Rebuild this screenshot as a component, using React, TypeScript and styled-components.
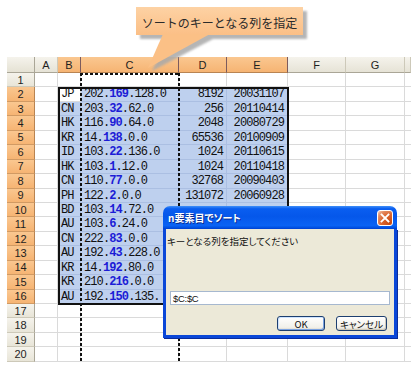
import React from 'react';
import styled, { createGlobalStyle } from 'styled-components';

const COLS = ['A', 'B', 'C', 'D', 'E', 'F', 'G', 'H'];
const TRACKS = '28px 23px 23px 98px 48px 61px 58px 59px 6px';
const ROW_H = 14.45;

// country, ip head, highlighted octet, ip tail, size, date
// (size/date of rows 10-16 sit under the dialog, so they are left blank)
type Row = [string, string, string, string, string, string];

const DATA: Row[] = [
  ['JP', '202.', '169', '.128.0', '8192', '20031107'],
  ['CN', '203.', '32', '.62.0', '256', '20110414'],
  ['HK', '116.', '90', '.64.0', '2048', '20080729'],
  ['KR', '14.', '138', '.0.0', '65536', '20100909'],
  ['ID', '103.', '22', '.136.0', '1024', '20110615'],
  ['HK', '103.', '1', '.12.0', '1024', '20110418'],
  ['CN', '110.', '77', '.0.0', '32768', '20090403'],
  ['PH', '122.', '2', '.0.0', '131072', '20060928'],
  ['BD', '103.', '14', '.72.0', '', ''],
  ['AU', '103.', '6', '.24.0', '', ''],
  ['CN', '222.', '83', '.0.0', '', ''],
  ['AU', '192.', '43', '.228.0', '', ''],
  ['KR', '14.', '192', '.80.0', '', ''],
  ['KR', '210.', '216', '.0.0', '', ''],
  ['AU', '192.', '150', '.135.', '', ''],
];

const GlobalStyle = createGlobalStyle`
  html, body {
    margin: 0;
    padding: 0;
    background: #fff;
  }
  body {
    font-family: "Liberation Sans", Arial, sans-serif;
  }
`;

const Screen = styled.div`
  position: relative;
  width: 419px;
  height: 370px;
  overflow: hidden;
  box-sizing: border-box;
  padding: 57px 8px 0 7px;
  background: #fff;
`;

/* cells and the selection marks share one grid cell, stacked */
const SheetStack = styled.div`
  display: grid;
  & > * {
    grid-area: 1 / 1;
  }
`;

const SheetGrid = styled.div`
  display: grid;
  grid-template-columns: ${TRACKS};
  grid-template-rows: 16px repeat(20, ${ROW_H}px);
`;

const MarkGrid = styled(SheetGrid)`
  pointer-events: none;
`;

const Corner = styled.div`
  background: linear-gradient(#f5f3ec, #e5e2d4);
  border-right: 1px solid #aaa697;
  border-bottom: 1px solid #aaa697;
`;

const ColHead = styled.div<{ $on?: boolean }>`
  display: flex;
  align-items: center;
  justify-content: center;
  overflow: hidden;
  font-size: 11px;
  color: #1e1e1e;
  border-bottom: 1px solid ${p => (p.$on ? '#b98452' : '#aaa697')};
  border-right: 1px solid ${p => (p.$on ? '#7d5b5d' : '#cdc9b9')};
  background: ${p =>
    p.$on ? 'linear-gradient(#fac790, #f6b473)' : 'linear-gradient(#f5f3ec, #e6e3d6)'};
`;

const RowHead = styled.div<{ $on?: boolean }>`
  display: flex;
  align-items: center;
  justify-content: center;
  font-size: 11px;
  color: #1e1e1e;
  border-right: 1px solid ${p => (p.$on ? '#b98452' : '#aaa697')};
  border-bottom: 1px solid ${p => (p.$on ? '#d19a63' : '#cdc9b9')};
  background: ${p =>
    p.$on ? 'linear-gradient(#fac790, #f6b473)' : 'linear-gradient(#f5f3ec, #e8e5d8)'};
`;

const Cell = styled.div<{ $sel?: boolean; $right?: boolean; $edge?: boolean }>`
  box-sizing: border-box;
  overflow: hidden;
  white-space: nowrap;
  padding: 1px 3px 0 3px;
  font: 12px/12px "Liberation Mono", "DejaVu Sans Mono", monospace;
  letter-spacing: -0.9px;
  color: #111;
  text-align: ${p => (p.$right ? 'right' : 'left')};
  background: ${p => (p.$sel ? '#bed0ee' : '#fff')};
  border-bottom: 1px solid ${p => (p.$sel ? '#abbfe2' : '#dadada')};
  border-right: ${p => (p.$edge ? 'none' : `1px solid ${p.$sel ? '#abbfe2' : '#dadada'}`)};
`;

const Octet = styled.b`
  color: #1c1cd6;
  font-weight: bold;
`;

const SelectionBox = styled.div`
  grid-column: 3 / 7;
  grid-row: 3 / 18;
  margin: 0 -1px -1px 0;
  border: 2px solid #111;
`;

const Marquee = styled.div`
  grid-column: 4 / 5;
  grid-row: 2 / 22;
  margin: 0 -1px 0 -1px;
  background:
    repeating-linear-gradient(90deg, #111 0 3px, transparent 3px 5px) top left / 100% 2px no-repeat,
    repeating-linear-gradient(180deg, #111 0 3px, transparent 3px 5px) top left / 2px 100% no-repeat,
    repeating-linear-gradient(180deg, #111 0 3px, transparent 3px 5px) top right / 2px 100% no-repeat;
`;

/* callout balloon */
const Callout = styled.div`
  position: absolute;
  left: 130px;
  top: 0;
  width: 190px;
  height: 75px;
`;

const Balloon = styled.svg`
  position: absolute;
  inset: 0;
`;

const CalloutText = styled.div`
  position: relative;
  box-sizing: border-box;
  width: 167px;
  height: 28px;
  margin: 7px 0 0 6px;
  padding-top: 2px;
  display: flex;
  align-items: center;
  justify-content: center;
  font: 12px "Noto Sans CJK JP", sans-serif;
  color: #2a2a2a;
`;

/* XP style dialog */
const Dialog = styled.div`
  position: absolute;
  left: 163px;
  top: 206px;
  width: 234px;
  height: 132px;
  display: flex;
  flex-direction: column;
  font-family: "Noto Sans CJK JP", sans-serif;
  font-feature-settings: "palt" 1;
`;

const TitleBar = styled.div`
  height: 23px;
  flex: none;
  display: flex;
  align-items: center;
  justify-content: space-between;
  padding: 0 4px 0 5px;
  border-radius: 7px 7px 0 0;
  background: linear-gradient(
    180deg,
    #3f8ff8 0%,
    #0a5ef0 12%,
    #0557ea 45%,
    #0a63f4 85%,
    #004fe0 95%,
    #003fcf 100%
  );
`;

const Title = styled.span`
  color: #fff;
  font-size: 10px;
  font-weight: bold;
  text-shadow: 1px 1px 0 #0a2a8a;
`;

const CloseButton = styled.div`
  width: 16px;
  height: 16px;
  box-sizing: border-box;
  display: flex;
  align-items: center;
  justify-content: center;
  border: 1px solid #fff;
  border-radius: 3px;
  background: radial-gradient(circle at 85% 85%, #c84a10 0%, #dc6630 50%, #e28a60 75%, #f5c3a8 95%);
`;

const Body = styled.div`
  flex: 1;
  display: flex;
  flex-direction: column;
  padding: 5px 4px 3px 4px;
  background: #ece9d8;
  border: 3px solid #0a47d8;
  border-top: none;
  box-shadow: 1px 1px 0 #0a2c9c;
`;

const Prompt = styled.div`
  margin-left: -3px;
  font-size: 9.5px;
  line-height: 14px;
  color: #111;
`;

const RefInput = styled.div`
  margin-top: 43px;
  height: 14px;
  box-sizing: border-box;
  padding-left: 2px;
  display: flex;
  align-items: center;
  background: #fff;
  border: 1px solid #a6b8cf;
  font: 9.5px "Liberation Sans", Arial, sans-serif;
  letter-spacing: -0.3px;
  color: #111;
`;

const ButtonRow = styled.div`
  margin-top: 11px;
  padding-right: 3px;
  display: flex;
  justify-content: flex-end;
  gap: 11px;
`;

const XpButton = styled.div<{ $width: number; $default?: boolean }>`
  width: ${p => p.$width}px;
  height: 15px;
  box-sizing: border-box;
  display: flex;
  align-items: center;
  justify-content: center;
  border: 1px solid #1d3f70;
  border-radius: 3px;
  background: linear-gradient(#ffffff, #f1f0ea 80%, #d8d3c7);
  box-shadow: ${p =>
    p.$default ? 'inset 1px 1px 0 #cde3ff, inset -1px -1px 0 #7aa2e0' : 'inset -1px -1px 0 #cfcabb'};
  font-size: 9.5px;
  color: #111;
`;

const App: React.FC = () => {
  const isSel = (r: number, c: number) => r >= 2 && r <= 16 && c >= 1 && c <= 4;

  const cellFor = (r: number, c: number) => {
    const row = r >= 2 && r <= 16 ? DATA[r - 2] : null;
    const active = r === 2 && c === 1;
    const sel = isSel(r, c) && !active;
    const edge = c === COLS.length - 1;
    const key = `c${r}-${c}`;
    if (!row) return <Cell key={key} $edge={edge} />;
    if (c === 1) return <Cell key={key} $sel={sel}>{row[0]}</Cell>;
    if (c === 2)
      return (
        <Cell key={key} $sel={sel}>
          {row[1]}
          <Octet>{row[2]}</Octet>
          {row[3]}
        </Cell>
      );
    if (c === 3) return <Cell key={key} $sel={sel} $right>{row[4]}</Cell>;
    if (c === 4) return <Cell key={key} $sel={sel} $right>{row[5]}</Cell>;
    return <Cell key={key} $edge={edge} />;
  };

  return (
    <Screen>
      <GlobalStyle />
      <SheetStack>
        <SheetGrid>
          <Corner />
          {COLS.map((name, c) => (
            <ColHead key={name} $on={c >= 1 && c <= 4}>
              {name === 'H' ? '' : name}
            </ColHead>
          ))}
          {Array.from({ length: 20 }, (_, i) => i + 1).map(r => (
            <React.Fragment key={r}>
              <RowHead $on={r >= 2 && r <= 16}>{r}</RowHead>
              {COLS.map((_, c) => cellFor(r, c))}
            </React.Fragment>
          ))}
        </SheetGrid>
        <MarkGrid>
          <Marquee />
          <SelectionBox />
        </MarkGrid>
      </SheetStack>

      <Callout>
        <Balloon width="190" height="75" viewBox="0 0 190 75">
          <defs>
            <linearGradient id="balloonFill" x1="0" y1="0" x2="0" y2="1">
              <stop offset="0" stopColor="#fdd2a4" />
              <stop offset="1" stopColor="#fbbf86" />
            </linearGradient>
            <filter id="soft" x="-10%" y="-10%" width="120%" height="130%">
              <feGaussianBlur stdDeviation="1" />
            </filter>
          </defs>
          <g fill="#a9a9a9" opacity="0.85" filter="url(#soft)">
            <rect x="10" y="11" width="167" height="28" />
            <polygon points="38,38 22,71 85,38" />
          </g>
          <rect x="6" y="7" width="167" height="28" fill="url(#balloonFill)" />
          <polygon points="33,34 18,68 80,34" fill="#fbc086" />
        </Balloon>
        <CalloutText>ソートのキーとなる列を指定</CalloutText>
      </Callout>

      <Dialog>
        <TitleBar>
          <Title>n要素目でソート</Title>
          <CloseButton>
            <svg width="10" height="10" viewBox="0 0 10 10">
              <path d="M1.5 1.5 L8.5 8.5 M8.5 1.5 L1.5 8.5" stroke="#fff" strokeWidth="1.8" strokeLinecap="square" />
            </svg>
          </CloseButton>
        </TitleBar>
        <Body>
          <Prompt>キーとなる列を指定してください</Prompt>
          <RefInput>$C:$C</RefInput>
          <ButtonRow>
            <XpButton $width={48} $default>OK</XpButton>
            <XpButton $width={51}>キャンセル</XpButton>
          </ButtonRow>
        </Body>
      </Dialog>
    </Screen>
  );
};

export default App;
